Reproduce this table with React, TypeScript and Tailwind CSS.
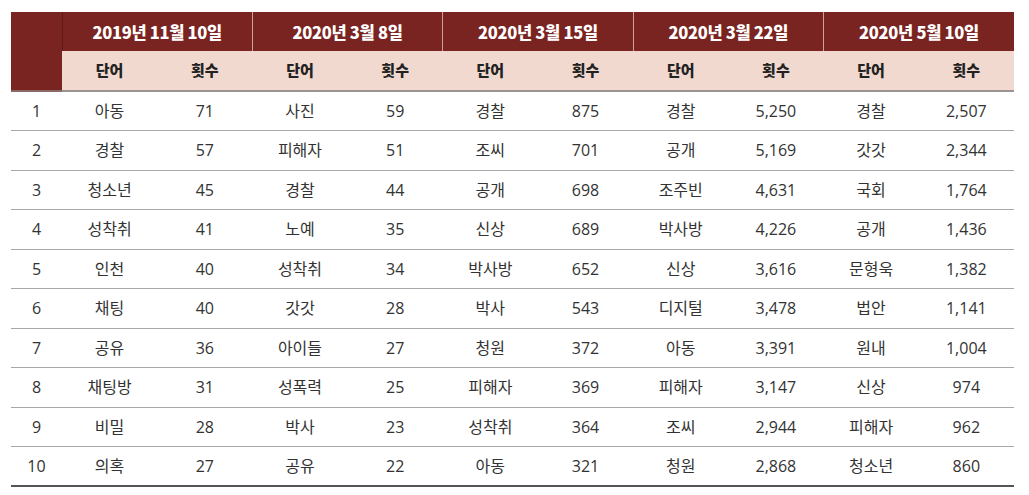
import React from "react";

const dates = ["2019년 11월 10일", "2020년 3월 8일", "2020년 3월 15일", "2020년 3월 22일", "2020년 5월 10일"];

const data: [string, string][][] = [
  [["아동", "71"], ["사진", "59"], ["경찰", "875"], ["경찰", "5,250"], ["경찰", "2,507"]],
  [["경찰", "57"], ["피해자", "51"], ["조씨", "701"], ["공개", "5,169"], ["갓갓", "2,344"]],
  [["청소년", "45"], ["경찰", "44"], ["공개", "698"], ["조주빈", "4,631"], ["국회", "1,764"]],
  [["성착취", "41"], ["노예", "35"], ["신상", "689"], ["박사방", "4,226"], ["공개", "1,436"]],
  [["인천", "40"], ["성착취", "34"], ["박사방", "652"], ["신상", "3,616"], ["문형욱", "1,382"]],
  [["채팅", "40"], ["갓갓", "28"], ["박사", "543"], ["디지털", "3,478"], ["법안", "1,141"]],
  [["공유", "36"], ["아이들", "27"], ["청원", "372"], ["아동", "3,391"], ["원내", "1,004"]],
  [["채팅방", "31"], ["성폭력", "25"], ["피해자", "369"], ["피해자", "3,147"], ["신상", "974"]],
  [["비밀", "28"], ["박사", "23"], ["성착취", "364"], ["조씨", "2,944"], ["피해자", "962"]],
  [["의혹", "27"], ["공유", "22"], ["아동", "321"], ["청원", "2,868"], ["청소년", "860"]],
];

export default function App() {
  return (
    <div className="w-[1029px] h-[495px] bg-white pt-[12px] pl-[11px]">
      <table className="w-[1003px] border-collapse table-fixed font-['Open_Sans','Noto_Sans_CJK_KR',sans-serif] text-[#333]">
        <colgroup>
          <col className="w-[51px]" />
          {Array.from({ length: 10 }).map((_, i) => (
            <col key={i} />
          ))}
        </colgroup>
        <thead>
          <tr className="h-[39px] bg-[#7a2421]">
            <th rowSpan={2} className="bg-[#7a2421] border-b-2 border-[#8a6a66] p-0"></th>
            {dates.map((d, i) => (
              <th
                key={d}
                colSpan={2}
                className={`p-0 pt-[2px] text-white text-[16.5px] font-black font-['Noto_Sans_CJK_KR',sans-serif] tracking-[-0.3px] ${
                  i > 0 ? "border-l border-[#c9a39d]" : "border-l border-[#5e1a17]"
                }`}
              >
                {d}
              </th>
            ))}
          </tr>
          <tr className="h-[40px] bg-[#f1d9cf]">
            {dates.map((d) => (
              <React.Fragment key={d}>
                <th className="p-0 text-[15px] font-black text-[#222] font-['Noto_Sans_CJK_KR',sans-serif] border-b-2 border-[#9a9393]">
                  단어
                </th>
                <th className="p-0 text-[15px] font-black text-[#222] font-['Noto_Sans_CJK_KR',sans-serif] border-b-2 border-[#9a9393]">
                  횟수
                </th>
              </React.Fragment>
            ))}
          </tr>
        </thead>
        <tbody>
          {data.map((row, r) => (
            <tr
              key={r}
              className={`h-[39.5px] ${
                r === data.length - 1 ? "border-b-2 border-[#555]" : "border-b border-[#a8a8a8]"
              }`}
            >
              <td className="p-0 text-center text-[16px]">{r + 1}</td>
              {row.map(([w, n], c) => (
                <React.Fragment key={c}>
                  <td className="p-0 text-center text-[16px]">{w}</td>
                  <td className="p-0 text-center text-[16px]">{n}</td>
                </React.Fragment>
              ))}
            </tr>
          ))}
        </tbody>
      </table>
    </div>
  );
}
